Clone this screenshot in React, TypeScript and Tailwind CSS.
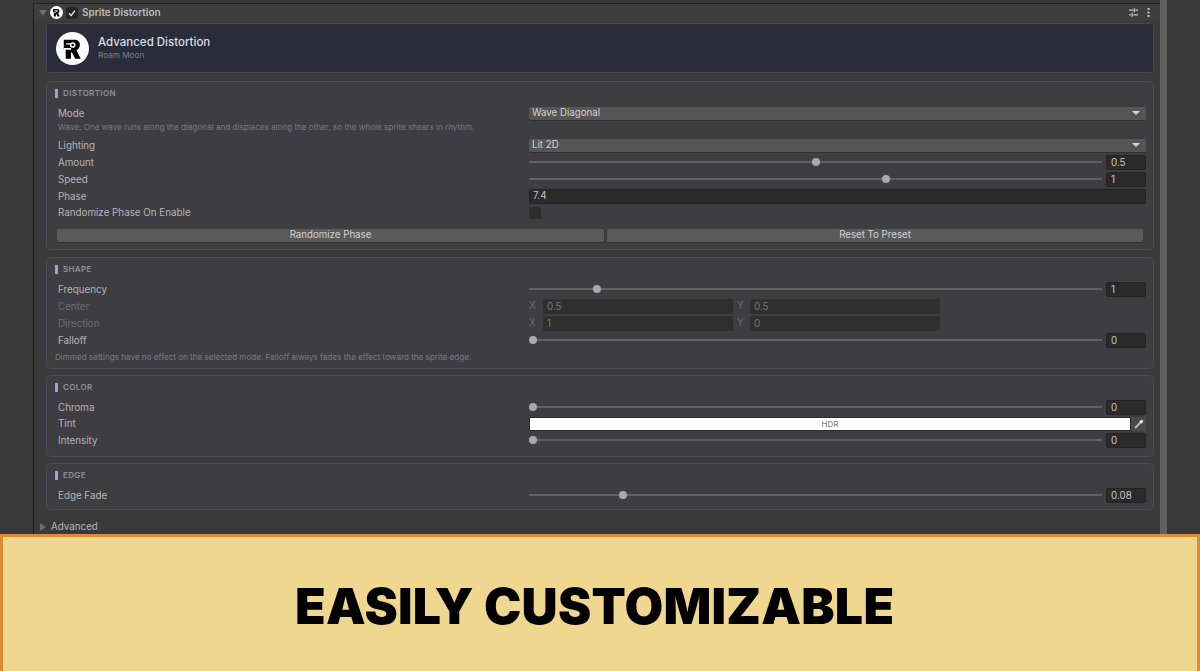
const font = "[font-family:Inter,'Liberation_Sans',sans-serif]";

function Logo({ size }: { size: number }) {
    return (
        <svg width={size} height={size} viewBox="0 0 34 34" className="shrink-0">
            <circle cx="17" cy="17" r="17" fill="#fff" />
            <path
                fill="#000"
                d="M8 8H19.5C22.6 8 24.6 10.2 24.6 13.2C24.6 15.8 23.3 17.8 21.2 19L25.6 27.6H19.8L16.4 21H15.4V27.6H10V18H8Z"
            />
            <circle cx="17.2" cy="13.4" r="2.9" fill="#fff" />
            <circle cx="17.2" cy="13.4" r="1.3" fill="#000" />
            <path fill="#fff" d="M10.5 11.6H15V12.9H10.5ZM8 16.6H15.5V18.2H8Z" />
        </svg>
    );
}

function Panel({ title, className, children }: { title: string; className: string; children: React.ReactNode }) {
    return (
        <section className={`mx-[46px] rounded-[4px] border border-[#4c4d58] bg-[#3e3d42] pl-[8px] pr-[7px] ${className}`}>
            <div className="flex h-[23px] items-center">
                <span className="h-[9px] w-[3px] bg-[#93a6e6]" />
                <span className="ml-[5px] mt-[-1px] text-[8px] font-semibold tracking-[0.35px] text-[#8f909b]">{title}</span>
            </div>
            {children}
        </section>
    );
}

function Row({ label, dim, h = 17, children }: { label: string; dim?: boolean; h?: number; children?: React.ReactNode }) {
    return (
        <div className="flex items-center" style={{ height: h }}>
            <span className={`ml-[3px] w-[471px] shrink-0 pt-[1px] text-[9.8px] ${dim ? "text-[#6c6c70]" : "text-[#b5b5b7]"}`}>{label}</span>
            <div className="flex min-w-0 flex-1 items-center">{children}</div>
        </div>
    );
}

function Slider({ at, value }: { at: number; value: string }) {
    return (
        <>
            <div className="relative mb-[1px] h-[2px] w-[573px] shrink-0 bg-[#626264]">
                <span
                    className="absolute top-[-3px] h-[8px] w-[8px] rounded-full bg-[#a9a9a9]"
                    style={{ left: at - 4 }}
                />
            </div>
            <div className="ml-[4px] flex h-[15px] flex-1 items-center rounded-[2px] border border-[#232323] bg-[#2a2a2a] pl-[4px] pt-[1px] text-[9.8px] text-[#c4c4c4]">
                {value}
            </div>
        </>
    );
}

function Dropdown({ value }: { value: string }) {
    return (
        <div className="flex h-[14px] w-full items-center justify-between rounded-[2px] border-b border-[#2f2f2f] bg-[#555555] pl-[3px] pr-[6px] text-[9.7px] text-[#d2d2d2]">
            <span>{value}</span>
            <span className="h-0 w-0 border-x-[4px] border-t-[4px] border-x-transparent border-t-[#d8d8d8]" />
        </div>
    );
}

function Vec({ x, y }: { x: string; y: string }) {
    const box = "ml-[3px] flex h-[15px] w-[190px] items-center rounded-[2px] bg-[#2f2f30] pl-[4px] pt-[1px] text-[9.8px] text-[#77777a]";
    return (
        <div className="flex items-center text-[9.8px] text-[#6c6c70]">
            <span className="w-[11px]">X</span>
            <div className={box}>{x}</div>
            <span className="ml-[4px] w-[10px]">Y</span>
            <div className={box}>{y}</div>
        </div>
    );
}

function Button({ label, className }: { label: string; className: string }) {
    return (
        <div className={`flex h-[14px] items-center justify-center rounded-[2px] border-b border-[#2f2f2f] bg-[#5a5a5a] text-[9.7px] text-[#d2d2d2] ${className}`}>
            {label}
        </div>
    );
}

export default function App() {
    return (
        <div className={`flex h-[671px] w-[1200px] flex-col overflow-hidden bg-[#383838] ${font}`}>
            <div className="relative h-[534px] shrink-0 overflow-hidden">
                <div className="ml-[33px] h-full w-[1127px] border-l border-[#1f1f1f] bg-[#3a3a3a]">
                    <div className="mt-[3px] border-t border-[#232323]" />
                    <header className="flex h-[17px] items-center bg-[#3e3e3e] pl-[5px] pr-[10px]">
                        <span className="h-0 w-0 border-x-[4px] border-t-[6px] border-x-transparent border-t-[#707070]" />
                        <span className="ml-[3px]"><Logo size={13} /></span>
                        <span className="ml-[3px] flex h-[12px] w-[12px] items-center justify-center rounded-[2px] bg-[#262626]">
                            <svg width="8" height="8" viewBox="0 0 8 8"><path d="M1 4.2 3.2 6.4 7 1.6" fill="none" stroke="#e8e8e8" strokeWidth="1.3" /></svg>
                        </span>
                        <span className="ml-[4px] text-[10px] font-semibold text-[#bcbcbc]">Sprite Distortion</span>
                        <svg width="9" height="9" viewBox="0 0 9 9" className="ml-auto" fill="#c0c0c0">
                            <path d="M0 1.6h4.6v1.2H0zM6.6 1.6H9v1.2H6.6zM4.8.2h1.3v4H4.8zM0 6.2h2v1.2H0zM4.4 6.2H9v1.2H4.4zM2.6 4.8h1.3v4H2.6z" />
                        </svg>
                        <svg width="3" height="9" viewBox="0 0 3 9" className="ml-[9px]" fill="#c0c0c0">
                            <rect x="0.5" y="0" width="2" height="2" />
                            <rect x="0.5" y="3.5" width="2" height="2" />
                            <rect x="0.5" y="7" width="2" height="2" />
                        </svg>
                    </header>
                </div>
                <div className="absolute inset-y-0 left-[1160px] w-[7px] bg-[#606060]" />
                <div className="absolute left-0 right-0 top-[23px]">
                    <div className="mx-[46px] flex h-[50px] items-center rounded-[4px] border border-[#444659] bg-[#2a2c39] pl-[9px]">
                        <Logo size={33} />
                        <div className="ml-[9px]">
                            <div className="text-[11.5px] font-medium leading-[14px] text-[#dcdde4]">Advanced Distortion</div>
                            <div className="mt-[1px] text-[8.2px] leading-[11px] text-[#7d7f8c]">Roam Moon</div>
                        </div>
                    </div>
                    <Panel title="DISTORTION" className="mt-[8px] h-[169px]">
                        <Row label="Mode"><Dropdown value="Wave Diagonal" /></Row>
                        <div className="ml-[3px] h-[11px] text-[8.1px] leading-[11px] text-[#7b7b80]">
                            Wave: One wave runs along the diagonal and displaces along the other, so the whole sprite shears in rhythm.
                        </div>
                        <div className="h-[4px]" />
                        <Row label="Lighting"><Dropdown value="Lit 2D" /></Row>
                        <Row label="Amount"><Slider at={287} value="0.5" /></Row>
                        <Row label="Speed"><Slider at={357} value="1" /></Row>
                        <Row label="Phase">
                            <div className="flex h-[15px] w-full items-center rounded-[2px] border border-[#232323] bg-[#2a2a2a] pl-[3px] text-[9.8px] text-[#c4c4c4]">7.4</div>
                        </Row>
                        <Row label="Randomize Phase On Enable" h={15}>
                            <span className="h-[12px] w-[12px] rounded-[2px] bg-[#2d2d2e]" />
                        </Row>
                        <div className="ml-[2px] mt-[9px] flex gap-[3px] pr-[3px]">
                            <Button label="Randomize Phase" className="w-[547px]" />
                            <Button label="Reset To Preset" className="flex-1" />
                        </div>
                    </Panel>
                    <Panel title="SHAPE" className="mt-[7px] h-[112px]">
                        <Row label="Frequency"><Slider at={68} value="1" /></Row>
                        <Row label="Center" dim><Vec x="0.5" y="0.5" /></Row>
                        <Row label="Direction" dim><Vec x="1" y="0" /></Row>
                        <Row label="Falloff"><Slider at={4} value="0" /></Row>
                        <div className="mt-[3px] h-[11px] text-[8.1px] leading-[11px] text-[#7b7b80]">
                            Dimmed settings have no effect on the selected mode. Falloff always fades the effect toward the sprite edge.
                        </div>
                    </Panel>
                    <Panel title="COLOR" className="mt-[6px] h-[82px]">
                        <Row label="Chroma"><Slider at={4} value="0" /></Row>
                        <Row label="Tint" h={16}>
                            <div className="flex h-[14px] flex-1 items-center justify-center border border-[#2b2b2b] bg-white text-[8px] text-[#777]">HDR</div>
                            <span className="flex h-[14px] w-[15px] items-center justify-center bg-[#4a4a4a]">
                                <svg width="10" height="10" viewBox="0 0 10 10">
                                    <path d="M1 9 6 4" stroke="#bdbdbd" strokeWidth="1.8" />
                                    <path d="M5 2.8 7.8.6 9.4 2.2 7.2 5z" fill="#e4e4e4" />
                                </svg>
                            </span>
                        </Row>
                        <Row label="Intensity"><Slider at={4} value="0" /></Row>
                    </Panel>
                    <Panel title="EDGE" className="mt-[6px] h-[47px]">
                        <Row label="Edge Fade"><Slider at={94} value="0.08" /></Row>
                    </Panel>
                    <div className="ml-[40px] mt-[10px] flex h-[14px] items-center">
                        <span className="h-0 w-0 border-y-[4px] border-l-[6px] border-y-transparent border-l-[#6e6e6e]" />
                        <span className="ml-[5px] text-[9.8px] text-[#b5b5b7]">Advanced</span>
                    </div>
                </div>
            </div>
            <div className="flex flex-1 items-center border-x-[3px] border-t-[3px] border-[#e08a34] bg-[#efd78f] pl-[292px] pt-[4px]">
                <span className="text-[50px] font-black leading-none tracking-[0.25px] text-black">EASILY CUSTOMIZABLE</span>
            </div>
        </div>
    );
}
